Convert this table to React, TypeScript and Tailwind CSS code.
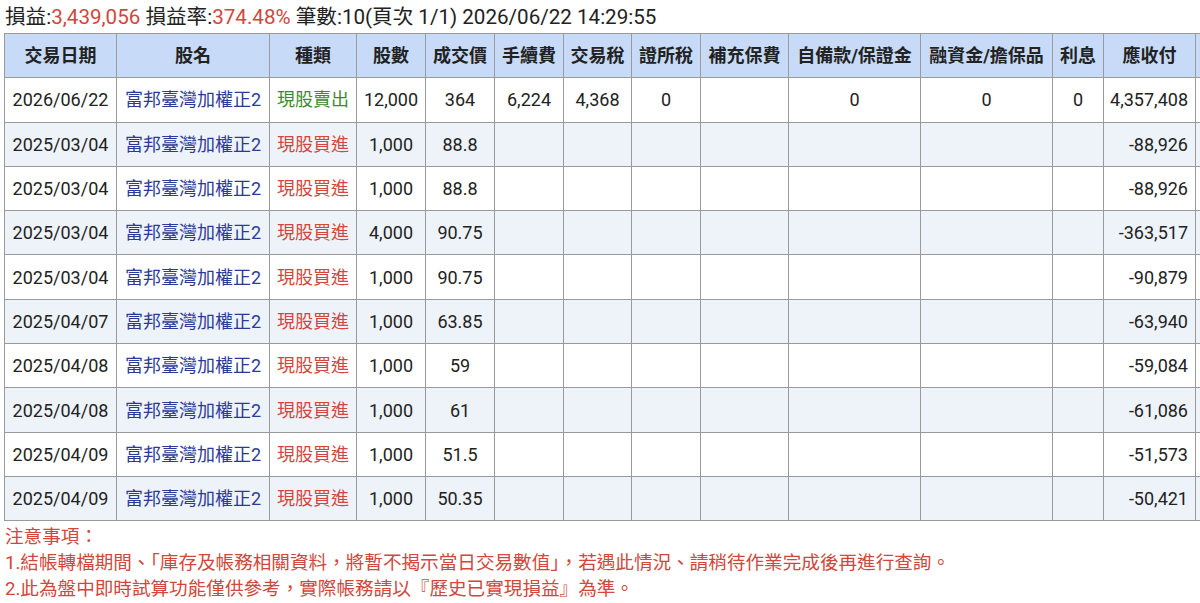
import React from "react"

type Row = {
  date: string
  type: "sell" | "buy"
  qty: string
  price: string
  fee?: string
  tax?: string
  secTax?: string
  own?: string
  fin?: string
  interest?: string
  net: string
}

const rows: Row[] = [
  { date: "2026/06/22", type: "sell", qty: "12,000", price: "364", fee: "6,224", tax: "4,368", secTax: "0", own: "0", fin: "0", interest: "0", net: "4,357,408" },
  { date: "2025/03/04", type: "buy", qty: "1,000", price: "88.8", net: "-88,926" },
  { date: "2025/03/04", type: "buy", qty: "1,000", price: "88.8", net: "-88,926" },
  { date: "2025/03/04", type: "buy", qty: "4,000", price: "90.75", net: "-363,517" },
  { date: "2025/03/04", type: "buy", qty: "1,000", price: "90.75", net: "-90,879" },
  { date: "2025/04/07", type: "buy", qty: "1,000", price: "63.85", net: "-63,940" },
  { date: "2025/04/08", type: "buy", qty: "1,000", price: "59", net: "-59,084" },
  { date: "2025/04/08", type: "buy", qty: "1,000", price: "61", net: "-61,086" },
  { date: "2025/04/09", type: "buy", qty: "1,000", price: "51.5", net: "-51,573" },
  { date: "2025/04/09", type: "buy", qty: "1,000", price: "50.35", net: "-50,421" },
]

// column widths measured off the screenshot
const cols = [112, 153, 87, 69, 69, 69, 68, 69, 88, 132, 132, 51, 92, 120]
const heads = ["交易日期", "股名", "種類", "股數", "成交價", "手續費", "交易稅", "證所稅", "補充保費", "自備款/保證金", "融資金/擔保品", "利息", "應收付", ""]

export default function App() {
  return (
    <div className="w-[1200px] h-[603px] overflow-hidden bg-white text-[#222] font-['Roboto','Noto_Sans_CJK_TC',sans-serif]">
      {/* summary line */}
      <div className="pl-[5px] pt-[5px] h-[33px] text-[20.6px] leading-[24px] whitespace-nowrap">
        損益:<span className="text-[#d2463c]">3,439,056</span> 損益率:<span className="text-[#d2463c]">374.48%</span> 筆數:10(頁次 1/1) 2026/06/22 14:29:55
      </div>

      <table className="ml-[4px] border-collapse table-fixed text-[18px]" style={{ width: cols.reduce((a, b) => a + b, 0) }}>
        <colgroup>
          {cols.map((w, i) => (
            <col key={i} style={{ width: w }} />
          ))}
        </colgroup>
        <thead>
          <tr className="h-[44.3px] bg-[#c7dbf8]">
            {heads.map((h, i) => (
              <th key={i} className="border border-[#9a9a9a] font-bold text-[18px] text-center whitespace-nowrap px-0">
                {h}
              </th>
            ))}
          </tr>
        </thead>
        <tbody>
          {rows.map((r, i) => (
            <tr key={i} className={`h-[44.3px] ${i % 2 === 0 ? "bg-white" : "bg-[#eef3fa]"}`}>
              <td className="border border-[#9a9a9a] text-center whitespace-nowrap">{r.date}</td>
              <td className="border border-[#9a9a9a] text-center whitespace-nowrap text-[#2b3a98]">富邦臺灣加權正2</td>
              <td className={`border border-[#9a9a9a] text-center whitespace-nowrap ${r.type === "sell" ? "text-[#3c8c2e]" : "text-[#d2463c]"}`}>
                {r.type === "sell" ? "現股賣出" : "現股買進"}
              </td>
              <td className="border border-[#9a9a9a] text-center">{r.qty}</td>
              <td className="border border-[#9a9a9a] text-center">{r.price}</td>
              <td className="border border-[#9a9a9a] text-center">{r.fee}</td>
              <td className="border border-[#9a9a9a] text-center">{r.tax}</td>
              <td className="border border-[#9a9a9a] text-center">{r.secTax}</td>
              <td className="border border-[#9a9a9a] text-center"></td>
              <td className="border border-[#9a9a9a] text-center">{r.own}</td>
              <td className="border border-[#9a9a9a] text-center">{r.fin}</td>
              <td className="border border-[#9a9a9a] text-center">{r.interest}</td>
              <td className="border border-[#9a9a9a] text-right pr-[7px]">{r.net}</td>
              <td className="border border-[#9a9a9a]"></td>
            </tr>
          ))}
        </tbody>
      </table>

      {/* notes */}
      <div className="pl-[5px] pt-[3px] text-[18.6px] leading-[26px] text-[#d2463c] whitespace-nowrap">
        <div>注意事項：</div>
        <div>1.結帳轉檔期間、「庫存及帳務相關資料，將暫不揭示當日交易數值」，若遇此情況、請稍待作業完成後再進行查詢。</div>
        <div>2.此為盤中即時試算功能僅供參考，實際帳務請以『歷史已實現損益』為準。</div>
      </div>
    </div>
  )
}
